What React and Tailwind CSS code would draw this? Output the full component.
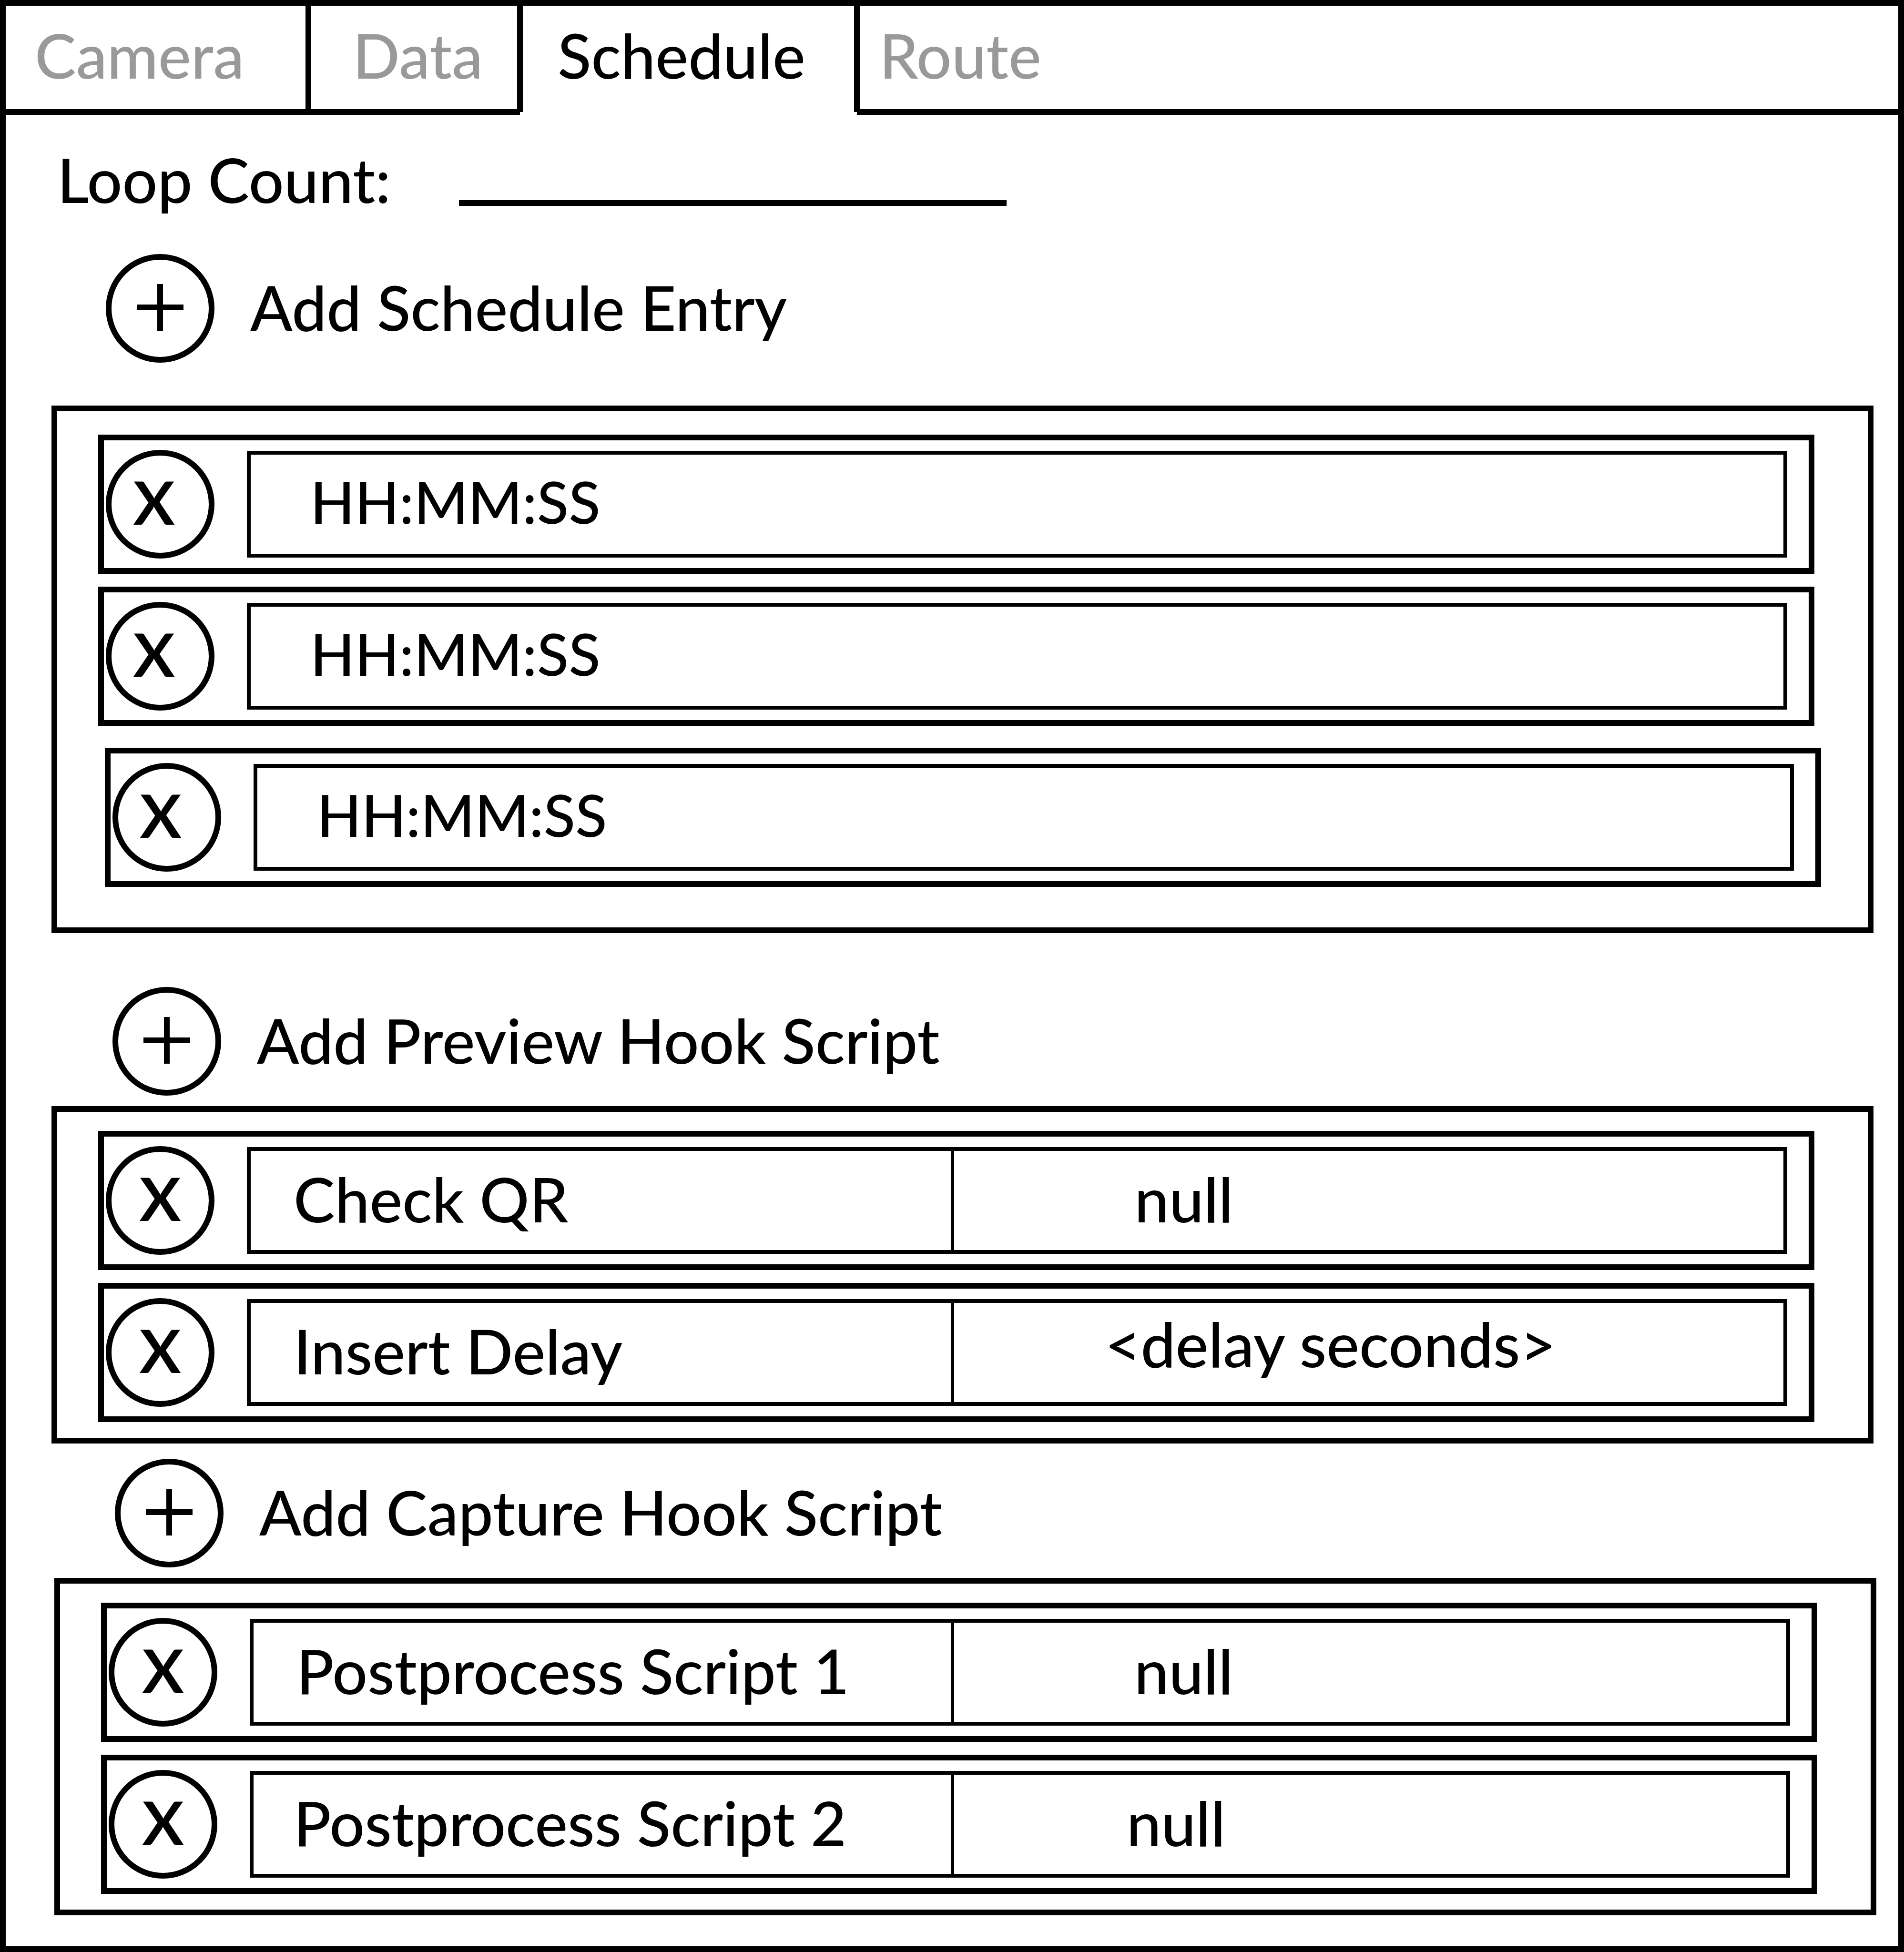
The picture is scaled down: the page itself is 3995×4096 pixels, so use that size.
import { Fragment, useState } from "react";

const TABS = [
  { name: "Camera", box: "w-[635px] pl-[61px]" },
  { name: "Data", box: "w-[444px] pl-[93px]" },
  { name: "Schedule", box: "w-[707px] pl-[79px]" },
  { name: "Route", box: "flex-1 pl-[47px]" },
];

function Tabs({ active, onSelect }) {
  return (
    <nav role="tablist" className="flex items-start">
      {TABS.map(({ name, box }, i) => (
        <Fragment key={name}>
          {i > 0 && <span className="z-10 -mx-[6px] h-[223px] w-3 shrink-0 bg-black" />}
          <button
            type="button"
            role="tab"
            aria-selected={name === active}
            onClick={() => onSelect(name)}
            className={`flex h-[229px] items-start border-b-[12px] pt-[25px] ${box} ${
              name === active ? "border-transparent text-black" : "border-black text-[#999999]"
            }`}
          >
            {name}
          </button>
        </Fragment>
      ))}
    </nav>
  );
}

function AddButton({ label, className }) {
  return (
    <button type="button" className={`flex items-center gap-[75px] ${className}`}>
      <span className="flex size-[228px] shrink-0 items-center justify-center rounded-full border-[12px] border-black pb-1">
        <svg viewBox="0 0 98 98" className="size-[98px]" stroke="black" strokeWidth="12" aria-hidden="true">
          <path d="M0 49H98M49 0V98" />
        </svg>
      </span>
      <span className="pb-[6px]">{label}</span>
    </button>
  );
}

function Row({ label, className = "ml-[86px] mr-[112px]", glyph = "", children }) {
  return (
    <li className={`flex h-[292px] items-center border-[12px] border-black pl-1 pr-[45px] ${className}`}>
      <button
        type="button"
        aria-label={label}
        className={`mr-[68px] flex size-[228px] shrink-0 items-center justify-center rounded-full border-[12px] border-black pb-[52px] text-[178px] leading-none font-medium ${glyph}`}
      >
        x
      </button>
      {children}
    </li>
  );
}

function TimeRow({ index, className }) {
  return (
    <Row label={`Remove entry ${index}`} className={className} glyph="pr-[26px]">
      <input
        type="text"
        aria-label={`Time of entry ${index}`}
        defaultValue="HH:MM:SS"
        className="h-[224px] min-w-0 flex-1 border-8 border-black pb-3 pl-[125px] text-[122px] outline-none"
      />
    </Row>
  );
}

function ScriptRow({ name, columns, namePad = "pl-[90px]", children }) {
  return (
    <Row label={`Remove ${name}`}>
      <div className={`grid h-[224px] min-w-0 flex-1 border-8 border-black ${columns}`}>
        <div className={`flex items-center border-r-[7px] border-black pb-2 ${namePad}`}>{name}</div>
        {children}
      </div>
    </Row>
  );
}

function Value({ pad = "pl-[378px]", children }) {
  return <div className={`flex items-center pb-2 ${pad}`}>{children}</div>;
}

export default function App() {
  const [tab, setTab] = useState("Schedule");

  return (
    <main className="min-h-screen border-[12px] border-black bg-white font-['Lato',sans-serif] text-[130px] leading-[156px] font-medium whitespace-nowrap text-black">
      <Tabs active={tab} onSelect={setTab} />

      <section className="mr-[52px] ml-[96px] pt-[57px]">
        <div className="flex h-[156px] items-start">
          <label htmlFor="loop-count" className="w-[855px] pl-3">
            Loop Count:
          </label>
          <input
            id="loop-count"
            type="text"
            className="h-[134px] w-[1149px] border-b-[12px] border-black outline-none"
          />
        </div>

        <AddButton label="Add Schedule Entry" className="mt-[79px] ml-[114px]" />
        <ul className="mt-[90px] border-[12px] border-black pt-[49px] pb-[85px]">
          <TimeRow index={1} className="mr-[112px] ml-[86px]" />
          <TimeRow index={2} className="mt-[27px] mr-[112px] ml-[86px]" />
          <TimeRow index={3} className="mt-[46px] mr-[98px] ml-[100px]" />
        </ul>
      </section>

      <section className="mr-[52px] ml-[96px]">
        <AddButton label="Add Preview Hook Script" className="mt-[113px] ml-[128px]" />
        <ul className="mt-[22px] flex flex-col gap-[27px] border-[12px] border-black pt-10 pb-[33px]">
          <ScriptRow name="Check QR" columns="grid-cols-[459fr_541fr]">
            <Value>null</Value>
          </ScriptRow>
          <ScriptRow name="Insert Delay" columns="grid-cols-[459fr_541fr]">
            <input
              type="text"
              aria-label="Delay in seconds"
              defaultValue="<delay seconds>"
              className="min-w-0 pb-[38px] pl-[316px] outline-none"
            />
          </ScriptRow>
        </ul>
      </section>

      <section className="mr-[46px] ml-[102px]">
        <AddButton label="Add Capture Hook Script" className="mt-8 ml-[127px]" />
        <ul className="mt-[22px] flex flex-col gap-[27px] border-[12px] border-black pt-10 pb-[33px]">
          <ScriptRow name="Postprocess Script 1" columns="grid-cols-[457fr_543fr]">
            <Value>null</Value>
          </ScriptRow>
          <ScriptRow name="Postprocess Script 2" columns="grid-cols-[457fr_543fr]" namePad="pl-[84px]">
            <Value pad="pl-[362px]">null</Value>
          </ScriptRow>
        </ul>
      </section>
    </main>
  );
}
